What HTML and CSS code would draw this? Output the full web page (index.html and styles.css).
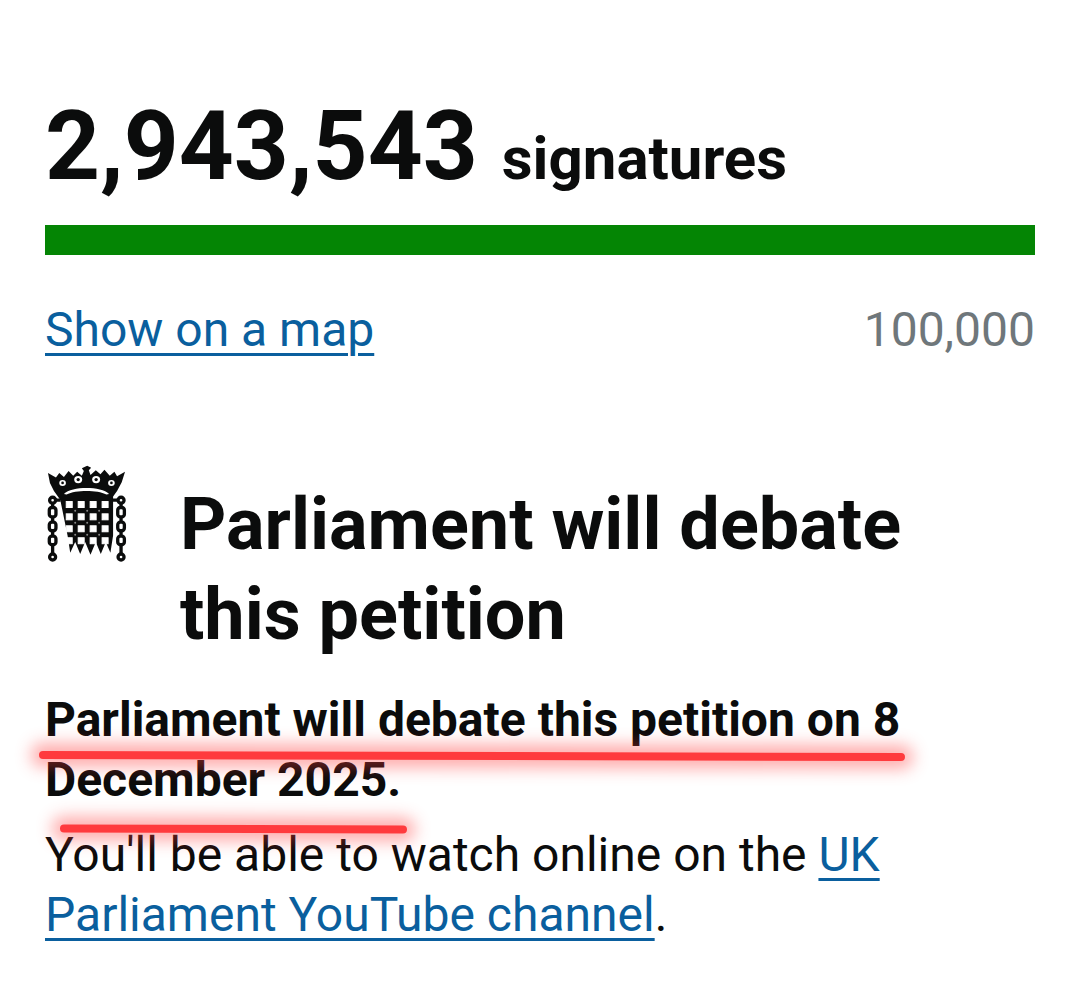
FILE: index.html
```html
<!DOCTYPE html>
<html lang="en">
<head>
<meta charset="utf-8">
<title>Petition</title>
<link rel="stylesheet" href="styles.css">
</head>
<body>
<main class="page">
  <p class="count"><span class="count-num">2,943,543</span> <span class="count-label">signatures</span></p>
  <div class="bar"></div>
  <div class="meta">
    <a class="link" href="#">Show on a map</a>
    <span class="target">100,000</span>
  </div>
  <section class="debate">
    <svg class="crest" viewBox="50 42 242 292" aria-hidden="true">
      <path fill="#0b0c0c" d="M170 44l12 6-7 8 5 14 16-14 14 12 12-14 16 18 14-12 8 14 24-14-10 32-14 26-20 28H90L70 120 58 96 52 66l24 14 10-14 14 12 14-18 14 14 12-12 14 12 6-14-6-8z"/>
      <path fill="#0b0c0c" d="M86 132h162v122l-8 52-14-32-15 36-15-36-16 38-16-38-15 36-15-36-15 32-8-52z"/>
      <g fill="#fff">
        <path d="M100 129c24-24 112-24 136 0l-8 2c-28-14-92-14-120 0z"/>
        <ellipse cx="96" cy="96" rx="10" ry="9"/><ellipse cx="143" cy="86" rx="12" ry="11"/><ellipse cx="197" cy="86" rx="12" ry="11"/><ellipse cx="243" cy="96" rx="10" ry="9"/>
      </g>
      <g fill="#fff" stroke="#fff" stroke-width="3">
        <rect x="107" y="152" width="18" height="18"/><rect x="143" y="152" width="18" height="18"/><rect x="179" y="152" width="18" height="18"/><rect x="215" y="152" width="18" height="18"/>
        <rect x="107" y="189" width="18" height="18"/><rect x="143" y="189" width="18" height="18"/><rect x="179" y="189" width="18" height="18"/><rect x="215" y="189" width="18" height="18"/>
        <rect x="107" y="225" width="18" height="18"/><rect x="143" y="225" width="18" height="18"/><rect x="179" y="225" width="18" height="18"/><rect x="215" y="225" width="18" height="18"/>
        <rect x="107" y="261" width="18" height="18"/><rect x="143" y="261" width="18" height="18"/><rect x="179" y="261" width="18" height="18"/><rect x="215" y="261" width="18" height="18"/>
      </g>
      <g fill="#0b0c0c">
        <circle cx="96" cy="96" r="4"/><circle cx="143" cy="86" r="5"/><circle cx="197" cy="86" r="5"/><circle cx="243" cy="96" r="4"/>
      </g>
      <g fill="#888">
        <circle cx="134" cy="180" r="3"/><circle cx="170" cy="180" r="3"/><circle cx="206" cy="180" r="3"/>
        <circle cx="134" cy="216" r="3"/><circle cx="170" cy="216" r="3"/><circle cx="206" cy="216" r="3"/>
        <circle cx="134" cy="252" r="3"/><circle cx="170" cy="252" r="3"/><circle cx="206" cy="252" r="3"/>
      </g>
      <g fill="none" stroke="#0b0c0c" stroke-width="10">
        <circle cx="66" cy="148" r="9"/><rect x="56" y="170" width="20" height="28" rx="8"/><rect x="56" y="214" width="20" height="26" rx="8"/><rect x="56" y="256" width="20" height="26" rx="8"/><circle cx="66" cy="319" r="9"/><path d="M66 158v12M66 198v16M66 240v16M66 282v28"/>
        <circle cx="272" cy="148" r="9"/><rect x="262" y="170" width="20" height="28" rx="8"/><rect x="262" y="214" width="20" height="26" rx="8"/><rect x="262" y="256" width="20" height="26" rx="8"/><circle cx="272" cy="319" r="9"/><path d="M272 158v12M272 198v16M272 240v16M272 282v28"/>
        <path d="M74 148h16M246 148h18"/>
      </g>
    </svg>
    <h2 class="heading">Parliament will debate this petition</h2>
  </section>
  <div class="details">
    <p class="strong">Parliament will debate this petition on 8 December 2025.</p>
    <p class="body">You'll be able to watch online on the <a class="link" href="#">UK Parliament YouTube channel</a>.</p>
    <span class="mark mark-one"></span>
    <span class="mark mark-two"></span>
  </div>
</main>
</body>
</html>
```
FILE: styles.css
```css
* { box-sizing: border-box; }
html, body { margin: 0; background: #fff; }
body { font-family: Roboto, "Liberation Sans", sans-serif; color: #0b0c0c; }
.page { width: 1080px; height: 1001px; padding: 96px 45px 0; overflow: hidden; }
p { margin: 0; }
.count { line-height: 100px; height: 129px; white-space: nowrap; }
.count-num { font-size: 96px; font-weight: 700; }
.count-label { font-size: 60px; font-weight: 700; margin-left: 20px; }
.bar { height: 30px; width: 990px; background: #048504; }
.meta { display: flex; justify-content: space-between; margin-top: 47px; font-size: 48px; line-height: 56px; }
.link { color: #0a5f9e; text-decoration: underline; text-decoration-thickness: 3px; text-underline-offset: 7px; }
.target { color: #6f777b; }
.debate { display: flex; align-items: flex-start; gap: 52px; margin-top: 105px; }
.crest { width: 81px; height: 97px; flex: none; margin-left: 2px; margin-top: 2px; }
.heading { margin: 0; font-size: 72px; font-weight: 700; line-height: 90px; width: 800px; padding-top: 17px; }
.details { position: relative; margin-top: 30px; width: 900px; }
.strong { font-size: 48px; font-weight: 700; line-height: 60px; }
.body { font-size: 48px; line-height: 60px; margin-top: 15px; }
.mark { position: absolute; height: 8px; background: #ff3a3d; border-radius: 4px; box-shadow: 0 0 16px 8px rgba(255, 60, 60, .42); transform: rotate(.13deg); }
.mark-one { left: -6px; top: 62px; width: 866px; }
.mark-two { left: 15px; top: 135px; width: 347px; }
```
